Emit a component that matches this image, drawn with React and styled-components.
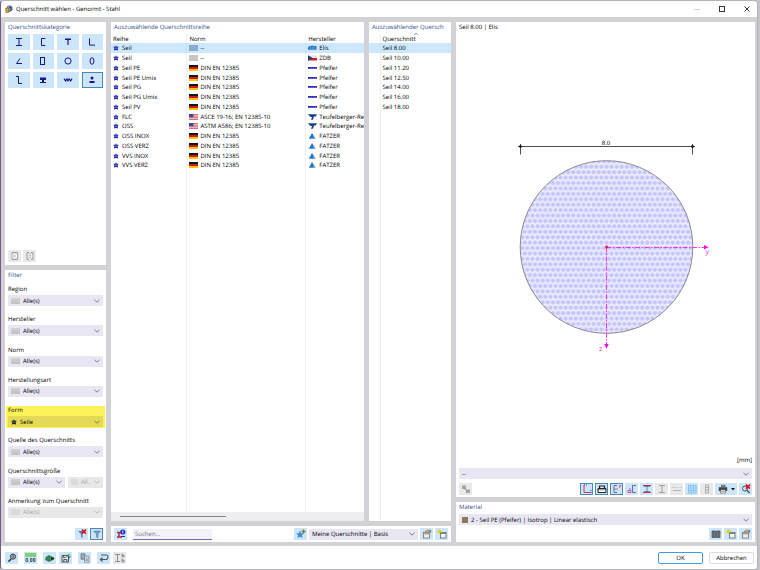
import React from "react";
import styled, { createGlobalStyle, css } from "styled-components";

const GlobalStyle = createGlobalStyle`
  *, *::before, *::after { box-sizing: border-box; }
  body { margin: 0; background: #c4c3c8; }
  body, button, input, select, table {
    font-family: "Open Sans", "Noto Sans", sans-serif;
    font-size: 6px;
    line-height: 8px;
    color: #000;
    text-rendering: geometricPrecision;
  }
  button, input, select { margin: 0; padding: 0; border: 0; border-radius: 0; }
  h2 { margin: 0; font-size: 6px; font-weight: 400; }
  svg { flex: none; }
`;

const Window = styled.div`
  display: flex;
  flex-direction: column;
  min-height: 100vh;
  margin-right: 2px;
  overflow: hidden;
  background: #fff;
  border: 1px solid #b4b3ba;
  border-left-color: #6f5c8c;
  border-radius: 4px;
`;

const TitleBar = styled.header`
  display: flex;
  align-items: center;
  height: 16px;
  padding: 0 2px 0 4px;
`;

const Title = styled.h1`
  flex: 1;
  margin: 0 0 0 3px;
  font-size: 6px;
  font-weight: 500;
`;

const WindowButton = styled.button`
  display: flex;
  align-items: center;
  justify-content: center;
  width: 17px;
  height: 14px;
  margin-left: 8px;
  background: none;
`;

const Body = styled.main`
  flex: 1;
  display: flex;
  gap: 5px;
  padding: 5px 2px 4px 4px;
  background: #d2d1d6;
`;

const Column = styled.div`
  display: flex;
  flex-direction: column;
  gap: 5px;
  min-width: 0;
  flex: ${(p) => p.$flex};
`;

const PanelRow = styled.div`
  flex: 1;
  display: flex;
  gap: 5px;
`;

const Panel = styled.section`
  display: flex;
  flex-direction: column;
  min-width: 0;
  overflow: hidden;
  background: #fff;
  flex: ${(p) => p.$flex || "none"};
  padding: ${(p) => p.$pad || "0"};
`;

const PanelTitle = styled.h2`
  height: 12px;
  padding: 1px 0 0 ${(p) => p.$indent || "0"};
  color: #34508a;
  white-space: nowrap;
`;

const PreviewTitle = styled(PanelTitle)`
  color: #000;
`;

const CategoryGrid = styled.div`
  display: grid;
  grid-template-columns: repeat(4, 1fr);
  grid-auto-rows: 16px;
  gap: 3px;
`;

const iconButton = css`
  display: flex;
  align-items: center;
  justify-content: center;
  background: ${(p) => (p.disabled ? "#e9e9e9" : "#cce5f8")};
  border: 1px solid ${(p) => (p.$active ? "#4b87b5" : "transparent")};
`;

const CategoryButton = styled.button`
  ${iconButton}
`;

const IconButton = styled.button`
  ${iconButton}
  flex: none;
  gap: 3px;
  width: ${(p) => (p.$wide ? "22px" : "13px")};
  height: 12px;
`;

const Toolbar = styled.div`
  display: flex;
  align-items: center;
  gap: 2px;
  margin-top: ${(p) => p.$top || "0"};
  justify-content: ${(p) => (p.$end ? "flex-end" : "flex-start")};
`;

const Spacer = styled.div`
  flex: 1;
`;

const FieldList = styled.div`
  flex: 1;
  display: flex;
  flex-direction: column;
  justify-content: space-between;
  margin: 3px 0 10px;
`;

const Field = styled.div`
  padding: 0 3px;
  ${(p) =>
    p.$highlight &&
    css`
      margin: 0 1px;
      padding: 0 2px;
      background: #fdf257;
      box-shadow: 0 1px 0 #fdf257;
    `}
`;

const FieldLabel = styled.label`
  display: block;
  height: 10px;
  white-space: nowrap;
`;

const SelectPair = styled.div`
  display: grid;
  grid-template-columns: 57px 1fr;
  gap: 3px;
`;

const SelectShell = styled.div`
  display: flex;
  align-items: center;
  gap: 3px;
  min-width: 0;
  height: 11px;
  padding: 0 3px;
  background: ${(p) => (p.$off ? "#e8e8e8" : p.$highlight ? "#e4da55" : "#e7e6f2")};
  flex: ${(p) => p.$flex || "none"};
`;

const NativeSelect = styled.select`
  flex: 1;
  min-width: 0;
  height: 11px;
  appearance: none;
  background: transparent;
  text-overflow: clip;
  &:disabled { color: #a3a3a3; opacity: 1; }
`;

const Swatch = styled.span`
  flex: none;
  width: ${(p) => p.$w || "9px"};
  height: 6px;
  background: ${(p) => p.$color || "linear-gradient(#d2d2d0, #bfc1be)"};
`;

const TableArea = styled.div`
  flex: 1;
  display: flex;
  min-height: 0;
`;

const Table = styled.table`
  width: 100%;
  height: 100%;
  table-layout: fixed;
  border-collapse: collapse;
  th, td {
    padding: 0 0 0 2px;
    font-weight: 400;
    text-align: left;
    white-space: nowrap;
    vertical-align: middle;
    line-height: 8px;
  }
  th + th, td + td { border-left: 1px solid #efeff1; }
`;

const HeadRow = styled.tr`
  height: 9px;
`;

const DataRow = styled.tr`
  height: 10px;
  &:nth-child(4n) { height: 9px; }
  background: ${(p) => (p.$selected ? "#cce8ff" : "none")};
  ${(p) => p.$selected && css`td + td { border-left-color: #c4e1f8; }`}
`;

const Cell = styled.div`
  display: flex;
  align-items: center;
  gap: ${(p) => (p.$tight ? "2px" : "3px")};
  height: 9px;
`;

const HeadCell = styled.div`
  position: relative;
`;

const SortMark = styled.svg`
  position: absolute;
  top: -3px;
  left: 30px;
`;

const ScrollStrip = styled.div`
  display: flex;
  align-items: center;
  height: 9px;
  padding: 0 9px;
  background: #eeeeef;
`;

const ScrollThumb = styled.div`
  width: 45%;
  height: 1px;
  background: #868688;
`;

const SearchInput = styled.input`
  width: 79px;
  height: 11px;
  margin: 0 0 0 4px;
  padding: 0 2px;
  background: #f2f2f8;
  border-bottom: 1px solid #6b6bb0;
  &::placeholder { color: #767676; opacity: 1; }
`;

const Drawing = styled.svg`
  flex: 1;
  min-height: 0;
  margin: 0 -3px;
`;

const Unit = styled.div`
  height: 12px;
  text-align: right;
`;

const Footer = styled.footer`
  display: flex;
  align-items: center;
  gap: 6px;
  height: 23px;
  padding: 0 3px 0 4px;
`;

const ToolGroup = styled.div`
  display: flex;
  gap: 3px;
`;

const DialogButton = styled.button`
  width: 45px;
  height: 12px;
  background: #fff;
  border: 1px solid ${(p) => (p.$primary ? "#3f9be6" : "#dcdcdc")};
  border-radius: 2px;
`;

const Icon = ({ children, size = 10, w, color = "#17178a", sw = 1 }) => (
  <svg width={w || size} height={size} viewBox={`0 0 ${w || size} ${size}`} fill="none" stroke={color} strokeWidth={sw} aria-hidden="true">
    {children}
  </svg>
);

const Chevron = ({ off }) => (
  <Icon size={6} sw={0.7} color={off ? "#a8a8a8" : "#555"}><path d="M.5 1.800 3 4.200 5.500 1.800" /></Icon>
);

const Star = ({ color = "#2a2fa6" }) => (
  <Icon size={6} sw={0} color="none">
    <path fill={color} d="M3 .2 3.800 1.700 5.700 1.700 4.700 3.300 5.100 5.600 3 4.900.9 5.600 1.300 3.300.3 1.700 2.200 1.700z" />
    <circle cx="3" cy="3.100" r=".7" fill="#b3b7ee" />
  </Icon>
);

const Flag = ({ kind }) => {
  if (kind === "de")
    return <Icon w={9} size={6} color="none"><path fill="#151515" d="M0 0h9v2H0z" /><path fill="#d01818" d="M0 2h9v2H0z" /><path fill="#f7c600" d="M0 4h9v2H0z" /></Icon>;
  if (kind === "us")
    return <Icon w={9} size={6} color="none"><path fill="#f0d4d8" d="M0 0h9v6H0z" /><path stroke="#cf5666" strokeWidth=".8" d="M0 .4h9M0 2.1h9M0 3.800h9M0 5.500h9" /><path fill="#3d4b8c" d="M0 0h4.400v3.200H0z" /></Icon>;
  return <Swatch $color={kind === "sel" ? "#88acd0" : "#c6c6c8"} />;
};

const Maker = ({ kind }) => {
  if (kind === "Elis")
    return <Icon w={9} size={6} sw={0}><path fill="#2f74c4" d="M0 2.400 1.500 1h1.400L4 .4h1V1h3.500v3.800H0z" /><path stroke="#8fbcec" strokeWidth=".5" d="M2.500 1.500v3M4.400 1.500v3M6.200 1.500v3" /></Icon>;
  if (kind === "ZDB")
    return <Icon w={9} size={6} sw={0}><path fill="#e4e4ee" d="M0 .5h9V3H0z" /><path fill="#d4202c" d="M0 3h9v2.600H0z" /><path fill="#183c8c" d="M0 .3 4.600 3 0 5.700z" /></Icon>;
  if (kind === "Pfeifer")
    return <Icon w={9} size={6} sw={0}><path fill="#1a1ab4" d="M0 2h9v1.800H0z" /><path stroke="#9a9af0" strokeWidth=".4" d="M2 2v1.500M4 2v1.500M6 2v1.500M7.600 2v1.500" /></Icon>;
  if (kind === "FATZER")
    return <Icon w={9} size={6} sw={0}><path fill="#1f78c8" d="M4 0 7.600 5.800H.8z" /><path fill="#8cc2ea" d="M5.200 3 7.600 5.800H5.800z" /></Icon>;
  return <Icon w={9} size={6} sw={0}><path fill="#1a3f94" d="M0 .3h9L7.800 2.400H6L5 5.800H3l1-2.600L1.800 2.600z" /></Icon>;
};

const categories = [
  ["I-Profile", <path d="M2 1.500h6M2 8.500h6M5 1.500v7" />],
  ["U-Profile", <path d="M7.300 1.500H3.500v7h3.800" />],
  ["T-Profile", <><path strokeWidth="1.500" d="M2 2.200h6" /><path strokeWidth="1.200" d="M5 2v6" /></>],
  ["L-Profile", <path d="M2.500 1.500v6.600H8" />],
  ["Winkel", <path d="M6 2.500 2.500 7.500H8" />],
  ["Rechteckrohre", <rect x="2.500" y="1.500" width="4" height="7" />],
  ["Rundrohre", <circle cx="5" cy="5" r="3.100" />],
  ["Ovalrohre", <ellipse cx="5" cy="5" rx="1.900" ry="3.300" />],
  ["Z-Profile", <path d="M2 1.500h2.500v7H8" />],
  ["Schienen", <><path stroke="none" fill="#17178a" d="M2 2.500h6V5H2zM4 5h2v2H4z" /><path strokeWidth="1.200" d="M2 7.500h6" /></>],
  ["Bleche", <path strokeWidth="1.200" d="M1 3.600 2.600 6 4 4 5 5.800 6.200 4 7.600 6 9 3.600" />],
  ["Rund", <><circle cx="5" cy="3" r="1.500" fill="#17178a" stroke="none" /><path fill="#17178a" stroke="none" d="M2.500 6h5v2h-5z" /></>],
];

const series = [
  ["Seil", "sel", "--", "Elis", "Elis"],
  ["Seil", "none", "--", "ZDB", "ZDB"],
  ["Seil PE", "de", "DIN EN 12385", "Pfeifer", "Pfeifer"],
  ["Seil PE Umix", "de", "DIN EN 12385", "Pfeifer", "Pfeifer"],
  ["Seil PG", "de", "DIN EN 12385", "Pfeifer", "Pfeifer"],
  ["Seil PG Umix", "de", "DIN EN 12385", "Pfeifer", "Pfeifer"],
  ["Seil PV", "de", "DIN EN 12385", "Pfeifer", "Pfeifer"],
  ["FLC", "us", "ASCE 19-16; EN 12385-10", "Teufel", "Teufelberger-Re"],
  ["OSS", "us", "ASTM A586; EN 12385-10", "Teufel", "Teufelberger-Re"],
  ["OSS INOX", "de", "DIN EN 12385", "FATZER", "FATZER"],
  ["OSS VERZ", "de", "DIN EN 12385", "FATZER", "FATZER"],
  ["VVS INOX", "de", "DIN EN 12385", "FATZER", "FATZER"],
  ["VVS VERZ", "de", "DIN EN 12385", "FATZER", "FATZER"],
];

const sections = ["8.00", "10.00", "11.20", "12.50", "14.00", "16.00", "18.00"];

const Select = ({ id, value, icon, disabled, highlight, flex, label }) => (
  <SelectShell $off={disabled} $highlight={highlight} $flex={flex}>
    {icon}
    <NativeSelect id={id} disabled={disabled} aria-label={label} defaultValue={value}>
      <option>{value}</option>
    </NativeSelect>
    <Chevron off={disabled} />
  </SelectShell>
);

const FilterField = ({ id, label, value = "Alle(s)", icon = <Swatch />, highlight, disabled }) => (
  <Field $highlight={highlight}>
    <FieldLabel htmlFor={id}>{label}</FieldLabel>
    <Select id={id} value={value} icon={icon} highlight={highlight} disabled={disabled} />
  </Field>
);

const OffSwatch = ({ w }) => <Swatch $w={w} $color="#dadada" />;

const NewWindow = () => (
  <Icon sw={0.8} color="#666"><rect x="3.500" y="3.500" width="5.500" height="5.500" fill="#f3f3f3" /><path d="M3.500 4.500H9" /><path stroke="#e0d000" strokeWidth=".9" d="M2.500.5v4M.5 2.500h4M1 1l3 3M4 1 1 4" /></Icon>
);
const EditWindow = () => (
  <Icon sw={0.8} color="#777"><rect x="1.500" y="3.500" width="6" height="5.500" fill="#eee" /><path d="M1.500 4.800h6" /><path fill="#c9a079" stroke="#8c6a50" strokeWidth=".5" d="M3 2.600 5.500 1 8 1.500v2L5 4.300z" /><path stroke="#4d7ca8" strokeWidth="1.200" d="M8.500 1v2.500" /></Icon>
);
const RedCross = ({ x = 5, y = 0 }) => <path stroke="#e0101c" strokeWidth="1.500" d={`M${x} ${y + 0.6}l4 4M${x + 4} ${y + 0.6}l-4 4`} />;

const viewTools = [
  ["Profilpunkte", "on", <Icon color="#d0336b"><path d="M2 1v7.500h7" /><path stroke="#3344a0" strokeDasharray="1 1" d="M2 1h3M9 6v3" /></Icon>],
  ["Abmessungen", "on", <Icon color="#222"><path d="M1 4.500h8v4H1z" fill="#fff" /><path strokeWidth="1.200" d="M2.500 4V2h5v2" /><path strokeWidth=".6" d="M1 5.800h8" /></Icon>],
  ["Hauptachsen", "on", <Icon color="#3d4fa8" sw={0.8}><path d="M5 1.500H2v7h3" /><path stroke="#c44a86" d="M2 5h4M7 1l2 2M9 1 7 4" /></Icon>],
  ["Schubmittelpunkt", "", <Icon color="#555e9a" sw={0.9}><path d="M9 1.500H5.500v7H9" /><path stroke="#d04a86" d="M3 4v2M1 6.500h3v2H1z" /></Icon>],
  ["Spannungspunkte", "", <Icon color="#c2304e"><path d="M1 1.500h8M1 8.500h8" /><path stroke="#444a80" d="M5 1.500v7M2 2.500h6M2 7.500h6" strokeWidth=".6" /></Icon>],
  ["c/t-Teile", "off", <Icon color="#9a9a9a"><path d="M2 1.500h6M2 8.500h6M5 1.500v7" /></Icon>],
  ["Werte", "off", <Icon color="#a5a5a5" sw={0.8}><path d="M1 4V3M3.500 4V3M6 4V3M9 4V3M1 6.500h8" /></Icon>],
  ["Raster", "", <Icon color="#5fb0f2" sw={0.6}><path d="M1.500 1v8M4 1v8M6.500 1v8M9 1v8M1 1.500h8.400M1 4h8.400M1 6.500h8.400M1 9h8.400" /></Icon>],
  ["Gesamtansicht", "off", <Icon color="#a0a0a0" sw={0.8}><path d="M3.500 1h3v8h-3zM3.500 3.500h3M3.500 6h3" /></Icon>],
];

const PrinterIcon = () => (
  <Icon sw={0} color="none"><path fill="#777" d="M3 .8h4.500V3H3z" /><path fill="#3c434a" d="M.8 3.200h8.400V7H.8z" /><path fill="#e6e6e6" d="M2.800 5.800h4.500V9H2.800z" /><path stroke="#555" strokeWidth=".5" d="M2.500 5.600h5v3.600h-5zM3.300 7.400h3.400" /></Icon>
);

const MagnifierIcon = () => (
  <Icon color="#4a5260"><circle cx="4" cy="4.500" r="2.500" /><path strokeWidth="1.500" d="m5.800 6.300 2.800 2.700" /><RedCross x={5} /></Icon>
);

const tools = {
  help: ["Hilfe", <Icon color="#39424c"><circle cx="6" cy="3.600" r="2.600" fill="#9fb0ba" /><path strokeWidth="1.800" d="M4 6 1.500 8.600" /><path strokeWidth=".8" d="M5.200 3q.8-1 1.400 0L6 4.200v.8" /></Icon>],
  units: ["Einheiten", <Icon w={11} color="none"><path fill="#7ed079" d="M0 0h11v4H0z" /><path stroke="#3a4860" strokeWidth=".8" d="M1 5.500h1.500v3H1zM4 8.800v-.6M5.500 5.500H7v3H5.500zM8.500 5.500H10v3H8.500z" /></Icon>],
  load: ["Importieren", <Icon sw={0.6} color="#1d5e34"><path fill="#2f8c4f" d="m.8 4.500 3-2 3.400 1.500V7l-3 1.500L.8 7z" /><path fill="#222" stroke="none" d="M6 4.800h1.500V3.600l2 2-2 1.800V6.400H6z" /></Icon>],
  save: ["Speichern", <Icon color="#41474f" sw={0.9}><path fill="#dfe5e9" d="M1 2.500h6.500v6.500H1z" /><path d="M2.800 9V6.500h3V9M2.500 2.500v2h2" /><path stroke="#2f9c50" strokeWidth="1.500" d="M5.500 3.800 8.500 1.200" /><path stroke="#222" d="M7.500 5 9.500 3.500" /></Icon>],
  copy: ["Kopieren", <Icon sw={0.7} color="#667078"><path fill="#9eabb4" d="M1 .8h4v5.500H1z" /><path fill="#fff" d="M4.500 3.200h4.300v6H4.500z" /><path d="M5.300 5h2.700M5.300 6.300h2.700M5.300 7.600h2.700" /></Icon>],
  undo: ["Zurücksetzen", <Icon color="#4c555e" sw={1.1}><path d="M2 2h5.200q1.800 0 1.800 2t-1.800 2.500H1.500M3.500 4.500 1.500 6.500l2 2" /></Icon>],
  size: ["Maße", <Icon color="#777" sw={0.8}><path d="M0 1.500h5M0 8.500h5M2.500 1.500v7M7 .5v3.300h2V2H7M7 5.500v3.300h2V7H7" /></Icon>, true],
};

const footerGroups = [["help"], ["units"], ["load", "save"], ["copy"], ["undo", "size"]];

const SectionDrawing = () => (
  <Drawing viewBox="0 0 299 422" preserveAspectRatio="xMidYMid meet" role="img" aria-label="Seil 8.00">
    <defs>
      <pattern id="wire" width="5.100" height="10.840" patternUnits="userSpaceOnUse">
        <rect width="5.100" height="10.840" fill="#f0f0fe" />
        <g fill="#c4c4fd" stroke="#d6d6fc" strokeWidth=".5">
          <circle cx="2.550" cy="2.710" r="2.100" />
          <circle cx="0" cy="8.130" r="2.100" />
          <circle cx="5.100" cy="8.130" r="2.100" />
        </g>
      </pattern>
    </defs>
    <circle cx="150.500" cy="213" r="86.300" fill="url(#wire)" stroke="#8a8a92" strokeWidth="1" />
    <g stroke="#222" strokeWidth=".8" fill="#111">
      <path d="M62 112.500h177M64.500 110v10.500M236.500 110v10.500" />
      <circle cx="64.500" cy="112.500" r="1.100" />
      <circle cx="236.500" cy="112.500" r="1.100" />
    </g>
    <text x="150" y="111" fontSize="6" textAnchor="middle" fill="#000">8.0</text>
    <g stroke="#ff1df4" strokeWidth=".9" strokeDasharray="5 1.500 1.500 1.500">
      <path d="M150.500 213.500h98M150.500 213v98" />
    </g>
    <path fill="#ff00f0" d="M248 211l4.500 2.200-4.500 2.200zM148.300 310h4.400l-2.200 4.800z" />
    <rect x="149.300" y="211.700" width="2.500" height="2.500" fill="#f0142c" />
    <text x="249.500" y="220" fontSize="7" fill="#ff1df4">y</text>
    <text x="143" y="317" fontSize="7" fill="#ff1df4">z</text>
  </Drawing>
);

export default function App() {
  return (
    <>
      <GlobalStyle />
      <Window>
        <TitleBar>
          <Icon size={8} sw={0.7} color="#4c5a80"><circle cx="4.500" cy="3.500" r="2.800" fill="#8da0bf" /><path fill="#d8a63a" stroke="#8a6a20" d="M.6 3.500 3.500 3v4.500H1z" /><path stroke="#2c3a5c" strokeWidth="1" d="M4 3l2-1v3L4.500 6.500" /></Icon>
          <Title>Querschnitt wählen - Genormt - Stahl</Title>
          <WindowButton aria-label="Minimieren"><Icon size={6} color="#d0d0d0"><path d="M0 3.500h6" /></Icon></WindowButton>
          <WindowButton aria-label="Maximieren"><Icon size={6} color="#333"><rect x=".5" y=".5" width="5" height="5" /></Icon></WindowButton>
          <WindowButton aria-label="Schließen"><Icon size={6} color="#333"><path d="m.5.5 5 5M5.500.5l-5 5" /></Icon></WindowButton>
        </TitleBar>

        <Body>
          <Column $flex="0 0 101px">
            <Panel $flex="242 1 0" $pad="0 3px 3px">
              <PanelTitle>Querschnittskategorie</PanelTitle>
              <CategoryGrid>
                {categories.map(([name, shape], i) => (
                  <CategoryButton key={name} aria-label={name} $active={i === 11}><Icon>{shape}</Icon></CategoryButton>
                ))}
              </CategoryGrid>
              <Toolbar $top="auto">
                <IconButton disabled aria-label="Waagerecht spiegeln"><Icon color="#8b8b8b" sw={0.8}><path d="M2 4V1.500h5.500V4M2 6v2.500h5.500V6M.8 5h1M3.500 5h1.500M7.500 5h1" /></Icon></IconButton>
                <IconButton disabled aria-label="Senkrecht spiegeln"><Icon color="#8b8b8b" sw={0.8}><path d="M4 1.500H2v7h2M6 1.500h2v7H6" /><path strokeDasharray="1 1" d="M5 2v6" /></Icon></IconButton>
              </Toolbar>
            </Panel>
            <Panel $flex="272 1 0" $pad="0 0 2px">
              <PanelTitle $indent="3px">Filter</PanelTitle>
              <FieldList>
                <FilterField id="region" label="Region" />
                <FilterField id="maker" label="Hersteller" />
                <FilterField id="norm" label="Norm" />
                <FilterField id="method" label="Herstellungsart" />
                <FilterField id="form" label="Form" value="Seile" icon={<Star color="#1f2214" />} highlight />
                <FilterField id="source" label="Quelle des Querschnitts" />
                <Field>
                  <FieldLabel htmlFor="size">Querschnittsgröße</FieldLabel>
                  <SelectPair>
                    <Select id="size" value="Alle(s)" icon={<Swatch />} />
                    <Select label="Größe, zweiter Wert" value="All..." icon={<OffSwatch w="7px" />} disabled />
                  </SelectPair>
                </Field>
                <FilterField id="note" label="Anmerkung zum Querschnitt" icon={<OffSwatch />} disabled />
              </FieldList>
              <Field>
                <Toolbar $end>
                  <IconButton aria-label="Filter löschen"><Icon><path fill="#5b7fb4" stroke="none" d="M1 2h7L5.500 5v4L4 8V5z" /><RedCross x={5} /></Icon></IconButton>
                  <IconButton $active aria-label="Filter"><Icon><path fill="#6f9ccc" stroke="#4b79ad" strokeWidth=".5" d="M1.500 2h7L6 5v4L4.500 8V5z" /></Icon></IconButton>
                </Toolbar>
              </Field>
            </Panel>
          </Column>

          <Column $flex="340 1 0">
            <PanelRow>
              <Panel $flex="253 1 0">
                <PanelTitle $indent="3px">Auszuwählende Querschnittsreihe</PanelTitle>
                <TableArea>
                  <Table>
                    <colgroup><col width="30%" /><col width="47%" /><col width="23%" /></colgroup>
                    <thead><HeadRow><th>Reihe</th><th>Norm</th><th>Hersteller</th></HeadRow></thead>
                    <tbody>
                      {series.map(([name, flag, norm, logo, maker], i) => (
                        <DataRow key={name + maker} $selected={i === 0}>
                          <td><Cell><Star />{name}</Cell></td>
                          <td><Cell $tight><Flag kind={flag} />{norm}</Cell></td>
                          <td><Cell $tight><Maker kind={logo} />{maker}</Cell></td>
                        </DataRow>
                      ))}
                      <tr><td /><td /><td /></tr>
                    </tbody>
                  </Table>
                </TableArea>
                <ScrollStrip><ScrollThumb /></ScrollStrip>
              </Panel>
              <Panel $flex="82 1 0">
                <PanelTitle $indent="3px">Auszuwählender Quersch</PanelTitle>
                <TableArea>
                  <Table>
                    <colgroup><col width="11" /><col /></colgroup>
                    <thead>
                      <HeadRow>
                        <th aria-label="Favorit" />
                        <th><HeadCell>Querschnitt<SortMark width="6" height="4" fill="none" stroke="#666" strokeWidth=".7"><path d="m1 3 2-2 2 2" /></SortMark></HeadCell></th>
                      </HeadRow>
                    </thead>
                    <tbody>
                      {sections.map((s, i) => (
                        <DataRow key={s} $selected={i === 0}><td /><td><Cell>{`Seil ${s}`}</Cell></td></DataRow>
                      ))}
                      <tr><td /><td /></tr>
                    </tbody>
                  </Table>
                </TableArea>
              </Panel>
            </PanelRow>
            <Panel $pad="2px 3px">
              <Toolbar>
                <IconButton aria-label="Querschnittsinfo"><Icon><path stroke="#c4202e" strokeWidth="1.500" d="M1 3.500h4M1 8h5M3 3.500V8" /><circle cx="6.800" cy="3" r="2.600" fill="#2630c8" stroke="none" /><path stroke="#fff" strokeWidth=".8" d="M6.800 1.500v3" /><path stroke="#2630c8" d="M5 7.500h4" /></Icon></IconButton>
                <SearchInput placeholder="Suchen..." aria-label="Suchen" />
                <Spacer />
                <IconButton aria-label="Zu Favoriten"><Icon sw={0}><path fill="#3d8fe0" d="M4 1.800 5.200 4.200 8 4.500 6 6.300 6.600 9 4 7.700 1.500 9 2 6.300.2 4.500l2.600-.3z" /><path stroke="#7f7a2c" strokeWidth="1.300" d="M7.500.5v4M5.500 2.500h4" /></Icon></IconButton>
                <Select flex="0 0 109px" label="Favoritengruppe" value="Meine Querschnitte | Basis" />
                <IconButton aria-label="Gruppe bearbeiten"><EditWindow /></IconButton>
                <IconButton aria-label="Neue Gruppe"><NewWindow /></IconButton>
              </Toolbar>
            </Panel>
          </Column>

          <Column $flex="299 1 0">
            <Panel $flex="1" $pad="0 3px 2px">
              <PreviewTitle>Seil 8.00 | Elis</PreviewTitle>
              <SectionDrawing />
              <Unit>[mm]</Unit>
              <Select label="Ansicht" value="--" />
              <Toolbar $top="4px">
                <IconButton disabled aria-label="Kopieren"><Icon color="#8d8d8d"><path fill="#a5a5a5" stroke="none" d="M1 1.500h4v3.500H1zM5 5.500h4V9H5z" /><path d="M3 4l4 4" /></Icon></IconButton>
                <Spacer />
                {viewTools.map(([name, state, icon]) => (
                  <IconButton key={name} aria-label={name} $active={state === "on"} disabled={state === "off"}>{icon}</IconButton>
                ))}
                <IconButton $wide aria-label="Drucken"><PrinterIcon /><Icon size={4} sw={0}><path fill="#111" d="M0 1h4L2 3.400z" /></Icon></IconButton>
                <IconButton aria-label="Zoom zurücksetzen"><MagnifierIcon /></IconButton>
              </Toolbar>
            </Panel>
            <Panel $pad="0 3px 2px">
              <PanelTitle>Material</PanelTitle>
              <Select label="Material" value="2 - Seil PE (Pfeifer) | Isotrop | Linear elastisch" icon={<Swatch $w="6px" $color="#8b7a5e" />} />
              <Toolbar $end $top="3px">
                <IconButton aria-label="Bibliothek"><Icon color="#3f464e" sw={0.7}><path fill="#7a848c" d="M1 2h3.500v6.500H1zM5.500 2H9v6.500H5.500z" /><path d="M2.700 2v6M7.300 2v6" /></Icon></IconButton>
                <IconButton aria-label="Neues Material"><NewWindow /></IconButton>
                <IconButton aria-label="Material bearbeiten"><EditWindow /></IconButton>
              </Toolbar>
            </Panel>
          </Column>
        </Body>

        <Footer>
          {footerGroups.map((group) => (
            <ToolGroup key={group[0]}>
              {group.map((id) => {
                const [name, icon, off] = tools[id];
                return <IconButton key={id} aria-label={name} disabled={off}>{icon}</IconButton>;
              })}
            </ToolGroup>
          ))}
          <Spacer />
          <DialogButton $primary>OK</DialogButton>
          <DialogButton>Abbrechen</DialogButton>
        </Footer>
      </Window>
    </>
  );
}
